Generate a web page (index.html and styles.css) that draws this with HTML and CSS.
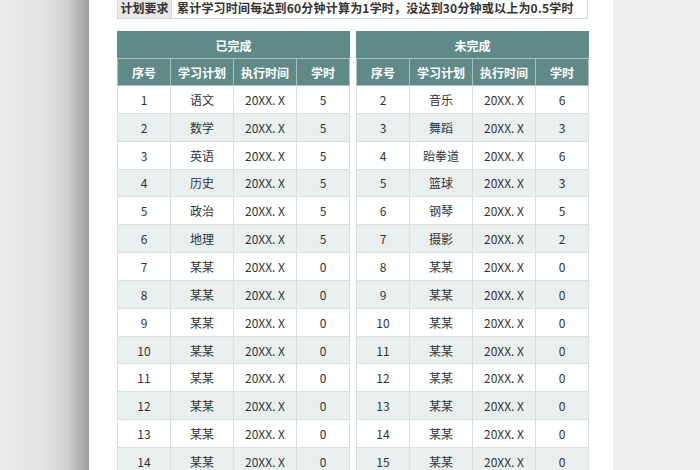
FILE: index.html
```html
<!DOCTYPE html>
<html lang="zh">
<head>
<meta charset="utf-8">
<link rel="stylesheet" href="styles.css">
</head>
<body>
<div class="screen">
  <div class="gutter-left"></div>
  <div class="page">
    <div class="req">
      <div class="req-label">计划要求</div>
      <div class="req-text">累计学习时间每达到60分钟计算为1学时，没达到30分钟或以上为0.5学时</div>
    </div>
    <div class="tables">
      <table class="plan">
        <colgroup><col class="c1"><col class="c2"><col class="c3"><col class="c4"></colgroup>
        <thead>
          <tr class="h1"><th colspan="4">已完成</th></tr>
          <tr class="h2"><th>序号</th><th>学习计划</th><th>执行时间</th><th>学时</th></tr>
        </thead>
        <tbody>
          <tr><td>1</td><td>语文</td><td>20XX. X</td><td>5</td></tr>
          <tr><td>2</td><td>数学</td><td>20XX. X</td><td>5</td></tr>
          <tr><td>3</td><td>英语</td><td>20XX. X</td><td>5</td></tr>
          <tr><td>4</td><td>历史</td><td>20XX. X</td><td>5</td></tr>
          <tr><td>5</td><td>政治</td><td>20XX. X</td><td>5</td></tr>
          <tr><td>6</td><td>地理</td><td>20XX. X</td><td>5</td></tr>
          <tr><td>7</td><td>某某</td><td>20XX. X</td><td>0</td></tr>
          <tr><td>8</td><td>某某</td><td>20XX. X</td><td>0</td></tr>
          <tr><td>9</td><td>某某</td><td>20XX. X</td><td>0</td></tr>
          <tr><td>10</td><td>某某</td><td>20XX. X</td><td>0</td></tr>
          <tr><td>11</td><td>某某</td><td>20XX. X</td><td>0</td></tr>
          <tr><td>12</td><td>某某</td><td>20XX. X</td><td>0</td></tr>
          <tr><td>13</td><td>某某</td><td>20XX. X</td><td>0</td></tr>
          <tr><td>14</td><td>某某</td><td>20XX. X</td><td>0</td></tr>
        </tbody>
      </table>
      <table class="plan">
        <colgroup><col class="c1"><col class="c2"><col class="c3"><col class="c4"></colgroup>
        <thead>
          <tr class="h1"><th colspan="4">未完成</th></tr>
          <tr class="h2"><th>序号</th><th>学习计划</th><th>执行时间</th><th>学时</th></tr>
        </thead>
        <tbody>
          <tr><td>2</td><td>音乐</td><td>20XX. X</td><td>6</td></tr>
          <tr><td>3</td><td>舞蹈</td><td>20XX. X</td><td>3</td></tr>
          <tr><td>4</td><td>跆拳道</td><td>20XX. X</td><td>6</td></tr>
          <tr><td>5</td><td>篮球</td><td>20XX. X</td><td>3</td></tr>
          <tr><td>6</td><td>钢琴</td><td>20XX. X</td><td>5</td></tr>
          <tr><td>7</td><td>摄影</td><td>20XX. X</td><td>2</td></tr>
          <tr><td>8</td><td>某某</td><td>20XX. X</td><td>0</td></tr>
          <tr><td>9</td><td>某某</td><td>20XX. X</td><td>0</td></tr>
          <tr><td>10</td><td>某某</td><td>20XX. X</td><td>0</td></tr>
          <tr><td>11</td><td>某某</td><td>20XX. X</td><td>0</td></tr>
          <tr><td>12</td><td>某某</td><td>20XX. X</td><td>0</td></tr>
          <tr><td>13</td><td>某某</td><td>20XX. X</td><td>0</td></tr>
          <tr><td>14</td><td>某某</td><td>20XX. X</td><td>0</td></tr>
          <tr><td>15</td><td>某某</td><td>20XX. X</td><td>0</td></tr>
        </tbody>
      </table>
    </div>
  </div>
  <div class="gutter-right"></div>
</div>
</body>
</html>
```
FILE: styles.css
```css
html, body {
  margin: 0;
  padding: 0;
  width: 700px;
  height: 470px;
  overflow: hidden;
  background: #efefef;
  font-family: "Noto Sans CJK SC", "Noto Sans", sans-serif;
  color: #333;
}
.screen {
  display: flex;
  width: 700px;
  height: 470px;
}
.gutter-left {
  width: 89px;
  flex: none;
  background: linear-gradient(to right, #ececec 0px, #e2e2e2 45px, #cfcfcf 68px, #a8a8a8 84px, #9c9c9c 89px);
}
.page {
  width: 524px;
  flex: none;
  background: #fff;
  padding-left: 28px;
  box-sizing: border-box;
}
.gutter-right {
  flex: 1;
  background: #efefef;
}
.req {
  display: flex;
  width: 471px;
  height: 19px;
  border: 1px solid #d6d9d9;
  border-top: none;
  box-sizing: border-box;
  font-size: 12px;
  font-weight: 600;
  line-height: 15px;
  color: #333;
}
.req-label {
  width: 53px;
  flex: none;
  background: #e7e9e9;
  text-align: center;
  border-right: 1px solid #d6d9d9;
}
.req-text {
  flex: 1;
  padding-left: 5px;
  white-space: nowrap;
  letter-spacing: 0.2px;
}
.tables {
  display: flex;
  gap: 6px;
  margin-top: 12px;
}
table.plan {
  width: 232px;
  table-layout: fixed;
  border-collapse: collapse;
  font-size: 12px;
}
col.c1 { width: 53px; }
col.c2 { width: 63px; }
col.c3 { width: 63px; }
col.c4 { width: 53px; }
th {
  background: #5f8a87;
  color: #fff;
  font-weight: bold;
  height: 27px;
  padding: 0;
  border: 1px solid #a9c3c0;
  text-align: center;
  box-sizing: border-box;
}
.h1 th { border-color: #5f8a87; border-bottom-color: #a9c3c0; }
td {
  height: 27.85px;
  padding: 0;
  text-align: center;
  border: 1px solid #d8dfde;
  color: #333;
  box-sizing: border-box;
}
tbody tr:nth-child(even) td {
  background: #e8efee;
}
```
